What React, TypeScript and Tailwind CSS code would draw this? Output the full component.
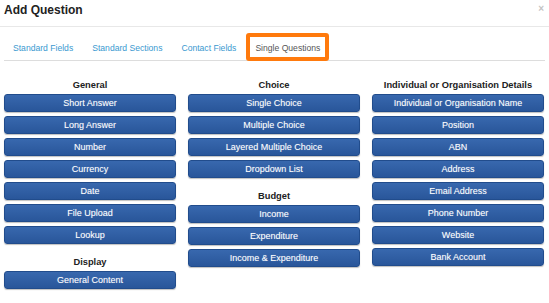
const GROUPS: { col: number; title: string; items: string[] }[][] = [
  [
    {
      col: 0,
      title: 'General',
      items: ['Short Answer', 'Long Answer', 'Number', 'Currency', 'Date', 'File Upload', 'Lookup'],
    },
    { col: 0, title: 'Display', items: ['General Content'] },
  ],
  [
    {
      col: 1,
      title: 'Choice',
      items: ['Single Choice', 'Multiple Choice', 'Layered Multiple Choice', 'Dropdown List'],
    },
    { col: 1, title: 'Budget', items: ['Income', 'Expenditure', 'Income & Expenditure'] },
  ],
  [
    {
      col: 2,
      title: 'Individual or Organisation Details',
      items: [
        'Individual or Organisation Name',
        'Position',
        'ABN',
        'Address',
        'Email Address',
        'Phone Number',
        'Website',
        'Bank Account',
      ],
    },
  ],
];

const TABS = ['Standard Fields', 'Standard Sections', 'Contact Fields'];

function QButton({ label }: { label: string }) {
  return (
    <button className="h-[18px] w-full rounded-[3px] border border-[#214c8c] bg-gradient-to-b from-[#3868ae] to-[#29569a] text-[9px] leading-[16px] text-white shadow-[0_1px_1px_rgba(0,0,0,0.25)] [text-shadow:0_0_1px_rgba(255,255,255,0.35)]">
      {label}
    </button>
  );
}

export default function App() {
  return (
    <div className="relative h-[303px] w-[549px] overflow-hidden bg-white font-['Liberation_Sans',Arial,sans-serif]">
      <div className="flex h-[27px] items-start border-b border-[#e8e8e8] px-[4px] pt-[3px]">
        <h1 className="text-[12px] font-bold leading-[14px] text-[#222]">Add Question</h1>
      </div>
      <span className="absolute right-[5px] top-[4px] text-[10px] font-bold leading-[10px] text-[#c4c4c4]">×</span>

      <div className="mx-[4px] flex h-[34px] items-end border-b border-[#dddddd]">
        {TABS.map((t) => (
          <a key={t} className="mr-[1px] px-[9px] pb-[7px] text-[8.6px] leading-[10px] text-[#3a99d0]">
            {t}
          </a>
        ))}
        <a className="mb-[-1px] h-[28px] rounded-[3px] border-[4px] border-[#ff7a0d] bg-white px-[5px] pt-[6px] text-[8.6px] leading-[10px] text-[#555]">
          Single Questions
        </a>
      </div>

      <div className="grid grid-cols-3 gap-x-[12px] pl-[4px] pr-[5px] pt-[19px]">
        {GROUPS.map((col, ci) => (
          <div key={ci} className="flex flex-col">
            {col.map((g, gi) => (
              <div key={g.title} className={gi > 0 ? 'mt-[13px]' : ''}>
                <div className="mb-[3px] h-[11px] text-center text-[9.3px] font-bold leading-[11px] text-[#222]">
                  {g.title}
                </div>
                <div className="flex flex-col gap-[4px]">
                  {g.items.map((it) => (
                    <QButton key={it} label={it} />
                  ))}
                </div>
              </div>
            ))}
          </div>
        ))}
      </div>
    </div>
  );
}
